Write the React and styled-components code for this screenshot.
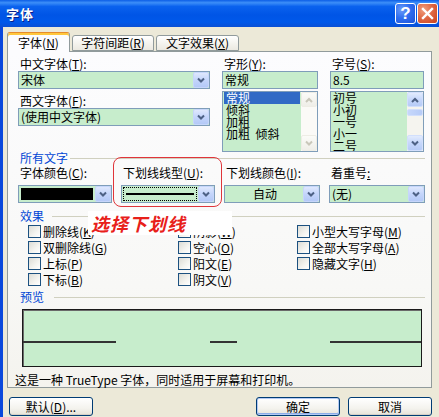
import React from 'react';
import styled, { createGlobalStyle } from 'styled-components';

const GlobalStyle = createGlobalStyle`
  html, body { margin: 0; padding: 0; background: #ece9d8; }
  body {
    font-family: "Noto Sans CJK SC", "Noto Sans", sans-serif;
    font-size: 12px;
    color: #000;
  }
  * { box-sizing: border-box; }
  u { text-underline-offset: 1px; }
`;

const Window = styled.div`
  width: 439px;
  height: 417px;
  display: flex;
  flex-direction: column;
  overflow: hidden;
  background: #ece9d8;
`;

const TitleBar = styled.div`
  height: 27px;
  flex: none;
  display: flex;
  align-items: center;
  gap: 1px;
  padding: 0 1px 0 6px;
  background: linear-gradient(180deg, #0c5ee6 0%, #3c8ef8 10%, #0a62ee 24%, #0055e6 55%, #0058ea 82%, #0a4fd4 100%);
  color: #fff;
  font-weight: bold;
  font-size: 13px;
  text-shadow: 1px 1px 0 #0a1f8a;
`;

const Title = styled.div`
  flex: 1;
  line-height: 27px;
  letter-spacing: 1px;
`;

const CaptionButton = styled.div`
  width: 21px;
  height: 21px;
  border: 1px solid #fff;
  border-radius: 3px;
  display: flex;
  align-items: center;
  justify-content: center;
  background: ${p => p.$close
    ? 'radial-gradient(circle at 30% 30%, #f0a080 0%, #e06a46 45%, #c8401c 100%)'
    : 'radial-gradient(circle at 30% 30%, #6c9cf8 0%, #2f6ef0 45%, #1d52d8 100%)'};
  font-family: "Liberation Sans", sans-serif;
  font-size: 17px;
  font-weight: bold;
  color: #fff;
  text-shadow: none;
`;

const Body = styled.div`
  flex: 1;
  display: flex;
  flex-direction: column;
  border-left: 3px solid #0a48dc;
  padding: 5px 0 0 4px;
`;

const TabRow = styled.div`
  display: flex;
  align-items: flex-end;
  height: 20px;
  margin-bottom: -1px;
  position: relative;
  z-index: 1;
`;

const Tab = styled.div`
  height: ${p => (p.$active ? '20px' : '16px')};
  width: ${p => p.$w}px;
  margin-right: 2px;
  margin-bottom: ${p => (p.$active ? '0' : '1px')};
  border: 1px solid #919b9c;
  border-bottom: ${p => (p.$active ? 'none' : '1px solid #919b9c')};
  border-top-color: ${p => (p.$active ? '#e68b2c' : '#919b9c')};
  border-radius: 3px 3px 0 0;
  background: ${p => (p.$active ? '#fcfcfe' : 'linear-gradient(180deg, #ffffff 0%, #f3f2ec 60%, #ebe9e1 100%)')};
  box-shadow: ${p => (p.$active ? 'inset 0 2px 0 #ffc73c' : 'none')};
  display: flex;
  justify-content: center;
  align-items: center;
  padding-top: ${p => (p.$active ? '1px' : '0')};
  white-space: nowrap;
  line-height: 14px;
`;

const Panel = styled.div`
  position: relative;
  width: 425px;
  height: 337px;
  flex: none;
  border: 1px solid #919b9c;
  background: linear-gradient(180deg, #fcfcfe 0%, #f8f8f6 70%, #f4f3ee 100%);
  padding: 4px 6px 0 10px;
  display: flex;
  flex-direction: column;
`;

const TopGrid = styled.div`
  display: grid;
  grid-template-columns: 192px 96px 94px;
  column-gap: 12px;
`;

const Field = styled.div`
  display: flex;
  flex-direction: column;
`;

const Label = styled.div`
  height: ${p => p.$h || 15}px;
  line-height: ${p => p.$h || 15}px;
  padding-left: 2px;
  white-space: nowrap;
  margin-top: ${p => p.$mt || 0}px;
  margin-bottom: ${p => p.$mb || 0}px;
`;

const Combo = styled.div`
  height: 18px;
  border: 1px solid #7f9db9;
  background: #c7edcc;
  display: flex;
  align-items: center;
  padding-left: ${p => (p.$pad === undefined ? 2 : p.$pad)}px;
`;

const ComboText = styled.div`
  flex: 1;
  line-height: 16px;
  white-space: nowrap;
  text-align: ${p => (p.$center ? 'center' : 'left')};
  overflow: hidden;
`;

const DropBtn = styled.div`
  width: 16px;
  height: 16px;
  flex: none;
  border: 1px solid #c6d6fb;
  border-radius: 2px;
  background: linear-gradient(180deg, #dfe8fd 0%, #c4d5fb 50%, #b4c9f7 100%);
  display: flex;
  align-items: center;
  justify-content: center;
`;

const Swatch = styled.div`
  flex: 1;
  height: 12px;
  background: #000;
  margin-right: 2px;
`;

const LineChoice = styled.div`
  flex: 1;
  height: 14px;
  margin-right: 1px;
  border: 1px dotted #000;
  background: #c7edcc;
  display: flex;
  align-items: center;
  padding: 0 2px;
`;

const LineSample = styled.div`
  flex: 1;
  height: 2px;
  background: #000;
`;

const TextBox = styled.div`
  height: 18px;
  border: 1px solid #7f9db9;
  background: #c7edcc;
  padding-left: 2px;
  line-height: 16px;
  margin-bottom: 2px;
`;

const ListBox = styled.div`
  height: 61px;
  border: 1px solid #7f9db9;
  background: #c7edcc;
  display: flex;
  overflow: hidden;
`;

const Items = styled.div`
  flex: 1;
  padding: 0 1px;
  overflow: hidden;
`;

const Item = styled.div`
  height: 12px;
  line-height: 12px;
  padding-left: ${p => p.$pl || 2}px;
  white-space: pre;
  background: ${p => (p.$sel ? '#316ac5' : 'transparent')};
  color: ${p => (p.$sel ? '#fff' : '#000')};
`;

const Scroll = styled.div`
  width: 16px;
  flex: none;
  display: flex;
  flex-direction: column;
  background: ${p => (p.$disabled ? '#fbfaf7' : '#f5f4ef')};
`;

const ScrollBtn = styled.div`
  height: ${p => p.$h}px;
  flex: none;
  border: 1px solid ${p => (p.$disabled ? '#eeede5' : '#d2dffc')};
  border-radius: 2px;
  background: ${p => (p.$disabled
    ? 'linear-gradient(180deg, #fbfbf8, #efeee8)'
    : 'linear-gradient(180deg, #e2ebfd 0%, #c6d7fb 50%, #b6cbf7 100%)')};
  display: flex;
  align-items: center;
  justify-content: center;
`;

const Track = styled.div`
  flex: 1;
  display: flex;
  flex-direction: column;
  padding-top: 2px;
`;

const Thumb = styled.div`
  height: 7px;
  border: 1px solid #d2dffc;
  border-radius: 2px;
  background: linear-gradient(90deg, #c6d7fb, #b6cbf7);
`;

const GroupHeader = styled.div`
  display: flex;
  align-items: center;
  height: 14px;
  margin-top: ${p => p.$mt || 0}px;
  padding-left: 2px;
  color: #0046d5;
  white-space: nowrap;
  line-height: 14px;
`;

const GroupLine = styled.div`
  flex: 1;
  height: 1px;
  background: #d0d0bf;
  margin-left: ${p => p.$gap}px;
`;

const Row2 = styled.div`
  display: grid;
  grid-template-columns: 94px 94px 96px 96px;
  column-gap: 9px;
  margin-top: 1px;
`;

const Effects = styled.div`
  display: grid;
  grid-template-columns: 150px 119px 1fr;
  grid-template-rows: repeat(4, 16px);
  grid-auto-flow: column;
  padding-left: 10px;
`;

const Check = styled.div`
  display: flex;
  align-items: center;
  gap: 2px;
  white-space: nowrap;
`;

const Box = styled.div`
  width: 13px;
  height: 13px;
  flex: none;
  border: 1px solid #1c5180;
  background: linear-gradient(135deg, #dcdcd5 0%, #f4f4f0 60%, #ffffff 100%);
`;

const PreviewBox = styled.div`
  width: 400px;
  height: 58px;
  margin: 5px 0 0 4px;
  border: 1px solid #1a1a1a;
  box-shadow: inset 1px 1px 0 #6a6a6a;
  background: #c7edcc;
  display: flex;
  align-items: center;
  justify-content: space-between;
  padding-top: 8px;
`;

const Segment = styled.div`
  width: ${p => p.$w}px;
  height: 2px;
  background: #333;
`;

const Note = styled.div`
  margin: 6px 0 0 -3px;
  line-height: 14px;
  white-space: nowrap;
`;

const ButtonRow = styled.div`
  display: flex;
  gap: 8px;
  margin-top: 9px;
  padding: 0 7px 0 2px;
`;

const XPButton = styled.div`
  width: 84px;
  height: 19px;
  border: 1px solid #003c74;
  border-radius: 3px;
  background: linear-gradient(180deg, #ffffff 0%, #f4f3ee 60%, #e6e3d8 100%);
  box-shadow: ${p => (p.$default ? 'inset 0 0 0 1px #b3c9f3, inset 0 -1px 0 1px #8cace8' : 'inset 0 -1px 0 #d6d0c5')};
  display: flex;
  align-items: center;
  justify-content: center;
  line-height: 14px;
  margin-left: ${p => (p.$push ? 'auto' : '0')};
`;

const RedOutline = styled.div`
  position: absolute;
  left: 105px;
  top: 105px;
  width: 109px;
  height: 50px;
  border: 1px solid #e0353a;
  border-radius: 8px;
  pointer-events: none;
`;

const Callout = styled.div`
  position: absolute;
  left: 80px;
  top: 159px;
  width: 144px;
  height: 24px;
  background: #fff;
  color: #e8201a;
  font-size: 18px;
  font-weight: bold;
  font-style: italic;
  line-height: 24px;
  padding-left: 3px;
  letter-spacing: 1px;
  white-space: nowrap;
`;

const Chevron = ({ up, color = '#4d6185' }) => (
  <svg width="8" height="6" viewBox="0 0 8 6">
    <path d={up ? 'M1 5 L4 2 L7 5' : 'M1 1.5 L4 4.5 L7 1.5'} stroke={color} strokeWidth="2" fill="none" />
  </svg>
);

const ComboBox = ({ children, center, pad }) => (
  <Combo $pad={pad}>
    {typeof children === 'string'
      ? <ComboText $center={center}>{children}</ComboText>
      : children}
    <DropBtn><Chevron /></DropBtn>
  </Combo>
);

const ScrollBar = ({ disabled }) => {
  const c = disabled ? '#c9c7ba' : '#4d6185';
  return (
    <Scroll $disabled={disabled}>
      <ScrollBtn $h={15} $disabled={disabled}><Chevron up color={c} /></ScrollBtn>
      <Track>{!disabled && <Thumb />}</Track>
      <ScrollBtn $h={16} $disabled={disabled}><Chevron color={c} /></ScrollBtn>
    </Scroll>
  );
};

const effects = [
  ['删除线', 'K'], ['双删除线', 'G'], ['上标', 'P'], ['下标', 'B'],
  ['阴影', 'W'], ['空心', 'O'], ['阳文', 'E'], ['阴文', 'V'],
  ['小型大写字母', 'M'], ['全部大写字母', 'A'], ['隐藏文字', 'H'],
];

export default function App() {
  return (
    <>
      <GlobalStyle />
      <Window>
        <TitleBar>
          <Title>字体</Title>
          <CaptionButton>?</CaptionButton>
          <CaptionButton $close>
            <svg width="13" height="13" viewBox="0 0 13 13">
              <path d="M2 2 L11 11 M11 2 L2 11" stroke="#fff" strokeWidth="2.4" strokeLinecap="square" />
            </svg>
          </CaptionButton>
        </TitleBar>
        <Body>
          <TabRow>
            <Tab $active $w={63}>字体(<u>N</u>)</Tab>
            <Tab $w={82}>字符间距(<u>R</u>)</Tab>
            <Tab $w={83}>文字效果(<u>X</u>)</Tab>
          </TabRow>
          <Panel>
            <TopGrid>
              <Field>
                <Label>中文字体(<u>T</u>):</Label>
                <ComboBox>宋体</ComboBox>
                <Label $mt={4}>西文字体(<u>F</u>):</Label>
                <ComboBox>(使用中文字体)</ComboBox>
              </Field>
              <Field>
                <Label>字形(<u>Y</u>):</Label>
                <TextBox>常规</TextBox>
                <ListBox>
                  <Items>
                    <Item $sel>常规</Item>
                    <Item>倾斜</Item>
                    <Item>加粗</Item>
                    <Item>加粗  倾斜</Item>
                  </Items>
                  <ScrollBar disabled />
                </ListBox>
              </Field>
              <Field>
                <Label>字号(<u>S</u>):</Label>
                <TextBox>8.5</TextBox>
                <ListBox>
                  <Items>
                    <Item $pl={1}>初号</Item>
                    <Item $pl={1}>小初</Item>
                    <Item $pl={1}>一号</Item>
                    <Item $pl={1}>小一</Item>
                    <Item $pl={1}>二号</Item>
                  </Items>
                  <ScrollBar />
                </ListBox>
              </Field>
            </TopGrid>

            <GroupHeader $mt={-1}>所有文字<GroupLine $gap={2} /></GroupHeader>
            <Row2>
              <Field>
                <Label $h={14} $mb={5}>字体颜色(<u>C</u>):</Label>
                <ComboBox><Swatch /></ComboBox>
              </Field>
              <Field>
                <Label $h={14} $mb={5}>下划线线型(<u>U</u>):</Label>
                <ComboBox pad={1}><LineChoice><LineSample /></LineChoice></ComboBox>
              </Field>
              <Field>
                <Label $h={14} $mb={5}>下划线颜色(<u>I</u>):</Label>
                <ComboBox center>自动</ComboBox>
              </Field>
              <Field>
                <Label $h={14} $mb={5}>着重号<u>:</u></Label>
                <ComboBox>(无)</ComboBox>
              </Field>
            </Row2>

            <GroupHeader $mt={6}>效果<GroupLine $gap={8} /></GroupHeader>
            <Effects>
              {effects.map(([t, k]) => (
                <Check key={k}>
                  <Box />
                  <span>{t}(<u>{k}</u>)</span>
                </Check>
              ))}
            </Effects>

            <GroupHeader $mt={3}>预览<GroupLine $gap={10} /></GroupHeader>
            <PreviewBox>
              <Segment $w={93} />
              <Segment $w={27} />
              <Segment $w={91} />
            </PreviewBox>
            <Note>这是一种 TrueType 字体，同时适用于屏幕和打印机。</Note>

            <RedOutline />
            <Callout>选择下划线</Callout>
          </Panel>
          <ButtonRow>
            <XPButton>默认(<u>D</u>)...</XPButton>
            <XPButton $push $default>确定</XPButton>
            <XPButton>取消</XPButton>
          </ButtonRow>
        </Body>
      </Window>
    </>
  );
}
